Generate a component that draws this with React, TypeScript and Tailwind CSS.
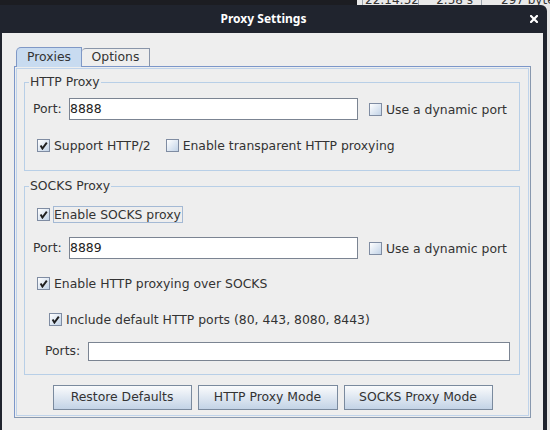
import React from "react";
import clsx from "clsx";

function CheckBox({ checked = false }: { checked?: boolean }) {
  return (
    <span className="flex h-[13px] w-[13px] shrink-0 items-center justify-center border border-[#7f8ca2] bg-linear-to-br from-[#ffffff] to-[#c2d3e7]">
      {checked && (
        <svg width="9" height="9" viewBox="0 0 9 9" aria-hidden="true">
          <path d="M1.6 4.6 L3.4 7.6 L7.8 1.6" stroke="#1f1f1f" strokeWidth="1.9" fill="none" />
        </svg>
      )}
    </span>
  );
}

function Option({
  label,
  checked,
  focused,
  className,
}: {
  label: string;
  checked?: boolean;
  focused?: boolean;
  className?: string;
}) {
  return (
    <div className={clsx("flex h-[20px] items-center", className)}>
      <CheckBox checked={checked} />
      <span
        className={clsx(
          "ml-[3px] border pr-[1px] pl-0 leading-[15px] whitespace-nowrap",
          focused ? "border-[#a4b9d4]" : "border-transparent"
        )}
      >
        {label}
      </span>
    </div>
  );
}

function Field({ value, className }: { value?: string; className?: string }) {
  return (
    <div
      className={clsx(
        "flex items-center border border-[#7b8492] bg-white text-[#222]",
        className
      )}
    >
      {value}
    </div>
  );
}

function Group({
  title,
  className,
  children,
}: {
  title: string;
  className?: string;
  children: React.ReactNode;
}) {
  return (
    <fieldset className={clsx("ml-[7px] mr-[8px] border border-[#b8cfe7]", className)}>
      <legend className="ml-[4px] px-[1px] leading-[16px]">{title}</legend>
      {children}
    </fieldset>
  );
}

export default function App() {
  return (
    <div className="flex h-[430px] w-[550px] flex-col overflow-hidden bg-[#e9e9e9] font-['DejaVu_Sans',sans-serif] text-[12.4px] text-[#333333]">
      {/* window behind, only a sliver shows */}
      <div className="flex h-[5px] shrink-0 items-end text-[12px] text-[#333]">
        <div className="h-full w-[357px] bg-[#1c1d22]" />
        <div className="h-full w-[6px] border-r border-[#9aa3ad]" />
        <div className="flex h-full w-[56px] items-end overflow-hidden border-r border-[#9aa3ad] pl-[2px]">
          <span className="leading-[9px]">22:14:52</span>
        </div>
        <div className="flex h-full w-[63px] items-end justify-end overflow-hidden border-r border-[#9aa3ad] pr-[8px]">
          <span className="leading-[9px]">2.58 s</span>
        </div>
        <div className="flex h-full flex-1 items-end overflow-hidden pl-[19px]">
          <span className="leading-[9px] whitespace-nowrap">297 bytes</span>
        </div>
      </div>

      <div className="flex flex-1">
        <div className="flex w-[547px] flex-col rounded-tr-[6px] bg-[#20242e]">
          {/* title bar */}
          <div className="flex h-[28px] shrink-0 items-center">
            <div className="flex-1 text-center font-['Noto_Sans',sans-serif] text-[12px] font-bold text-white">
              Proxy Settings
            </div>
            <div className="flex w-[20px] items-center pl-[3px]">
              <svg width="8" height="8" viewBox="0 0 8 8" aria-hidden="true">
                <path d="M1 1 L7 7 M7 1 L1 7" stroke="#ffffff" strokeWidth="2.2" strokeLinecap="square" />
              </svg>
            </div>
          </div>

          {/* dialog body */}
          <div className="ml-[2px] mr-[4px] flex-1 bg-[#eeeeee] px-[12px] pt-[14px]">
            <div className="flex h-[19px] items-end pl-[2px]">
              <div className="relative z-10 -mb-[1px] flex h-[20px] w-[66px] items-center justify-center rounded-tl-[5px] border-t border-r border-l border-[#7f98c6] bg-[#c8dbf0]">
                Proxies
              </div>
              <div className="flex h-[18px] w-[68px] items-center justify-center rounded-tl-[4px] border-t border-r border-[#8995a9]">
                Options
              </div>
            </div>

            <div className="border-t border-l border-[#7c97c9] border-r-[#8898ae] border-b-[#8898ae] border-r border-b p-[1px]">
              <div className="border border-[#bfd3ea] pt-[5px] pb-[5px]">
                <Group title="HTTP Proxy" className="pb-[15px]">
                  <div className="mt-[8px] flex items-center pl-[8px]">
                    <span className="w-[36px]">Port:</span>
                    <Field value="8888" className="h-[22px] w-[289px]" />
                    <Option label="Use a dynamic port" className="ml-[11px]" />
                  </div>
                  <div className="mt-[15px] flex items-center pl-[12px]">
                    <Option label="Support HTTP/2" checked />
                    <Option label="Enable transparent HTTP proxying" className="ml-[13px]" />
                  </div>
                </Group>

                <Group title="SOCKS Proxy" className="mt-[7px] pb-[13px]">
                  <div className="mt-[10px] flex pl-[12px]">
                    <Option label="Enable SOCKS proxy" checked focused />
                  </div>
                  <div className="mt-[13px] flex items-center pl-[8px]">
                    <span className="w-[36px]">Port:</span>
                    <Field value="8889" className="h-[22px] w-[289px]" />
                    <Option label="Use a dynamic port" className="ml-[11px]" />
                  </div>
                  <div className="mt-[14px] flex pl-[12px]">
                    <Option label="Enable HTTP proxying over SOCKS" checked />
                  </div>
                  <div className="mt-[16px] flex pl-[24px]">
                    <Option label="Include default HTTP ports (80, 443, 8080, 8443)" checked />
                  </div>
                  <div className="mt-[13px] flex items-center pr-[9px] pl-[20px]">
                    <span className="w-[43px]">Ports:</span>
                    <Field className="h-[19px] flex-1" />
                  </div>
                </Group>

                <div className="mt-[10px] flex justify-center gap-[6px]">
                  {[
                    ["Restore Defaults", "w-[139px]"],
                    ["HTTP Proxy Mode", "w-[140px]"],
                    ["SOCKS Proxy Mode", "w-[149px]"],
                  ].map(([label, w]) => (
                    <button
                      key={label}
                      className={clsx(
                        "h-[25px] border border-[#7a8a9e] bg-linear-to-b from-[#fafbfc] to-[#c3d3e6] text-[#333333]",
                        w
                      )}
                    >
                      {label}
                    </button>
                  ))}
                </div>
              </div>
            </div>
          </div>
        </div>
        <div className="flex-1 bg-[#e6e6e6]" />
      </div>
    </div>
  );
}
